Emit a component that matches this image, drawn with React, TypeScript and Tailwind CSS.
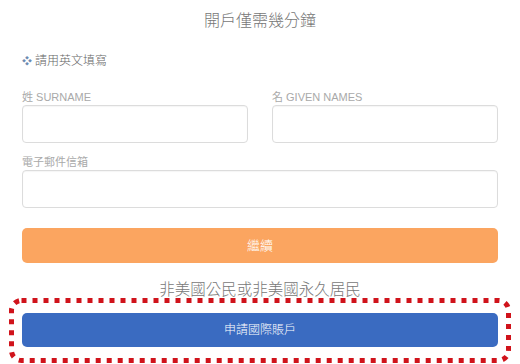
const cjk = { fontFamily: '"Liberation Sans", "Noto Sans CJK TC", sans-serif' }

function Field({ label, className = '' }: { label: string; className?: string }) {
    return (
        <div className={`flex flex-col ${className}`}>
            <span className="text-[11px] leading-[14px] text-[#a9a9a9] mb-px">{label}</span>
            <div className="h-[38px] rounded-[4px] border border-[#dcdcdc] bg-white shadow-[inset_0_1px_1px_rgba(0,0,0,0.04)]" />
        </div>
    )
}

export default function App() {
    return (
        <div className="w-[520px] h-[364px] bg-white overflow-hidden px-[22px] pt-[9px]" style={cjk}>
            {/* Header */}
            <h1 className="text-center text-[16px] leading-[24px] font-light text-[#777]">開戶僅需幾分鐘</h1>

            <p className="mt-[19px] text-[12px] leading-[18px] font-light text-[#666]">
                <span className="text-[#6d8bb0] text-[10px] mr-[3px]">❖</span>請用英文填寫
            </p>

            {/* Name fields */}
            <div className="mt-[19px] grid grid-cols-2 gap-x-[24px]">
                <Field label="姓 SURNAME" />
                <Field label="名 GIVEN NAMES" />
            </div>

            <Field label="電子郵件信箱" className="mt-[12px]" />

            <button className="mt-[20px] w-full h-[35px] rounded-[5px] bg-[#fba560] text-white text-[13px] font-light block">
                繼續
            </button>

            <p className="mt-[16px] text-center text-[15.5px] leading-[22px] font-light text-[#777]">
                非美國公民或非美國永久居民
            </p>

            {/* Highlighted international account */}
            <div className="relative mt-[-3px] mx-[-13px] h-[65px] pt-[15px] px-[13px]">
                <svg className="absolute inset-0 w-full h-full pointer-events-none" viewBox="0 0 502 65" preserveAspectRatio="none">
                    <rect x="2.5" y="2.5" width="497" height="60" rx="10" fill="none" stroke="#d0131b" strokeWidth="5" strokeDasharray="5 6" />
                </svg>
                <button className="relative w-full h-[34px] rounded-[5px] bg-[#3a6bc1] text-white text-[12px] font-light block">
                    申請國際賬戶
                </button>
            </div>
        </div>
    )
}
